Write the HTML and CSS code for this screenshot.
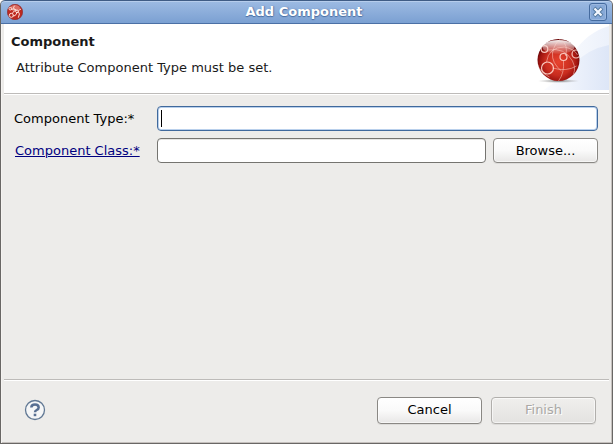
FILE: index.html
```html
<!DOCTYPE html>
<html lang="en">
<head>
<meta charset="utf-8">
<title>Add Component</title>
<link rel="stylesheet" href="styles.css">
</head>
<body>
<form class="dialog">
  <div class="titlebar">
    <svg class="app-icon" viewBox="0 0 48 48" aria-hidden="true">
      <circle cx="24" cy="24" r="23" fill="#bd2920" stroke="#8c2d32" stroke-width="2"/>
      <ellipse cx="24" cy="12" rx="15" ry="9" fill="#e88b80" opacity=".7"/>
      <g fill="none" stroke="#ffdcd4" stroke-width="3">
        <circle cx="13" cy="34" r="6"/><circle cx="30" cy="22" r="4"/><circle cx="10" cy="14" r="4"/>
        <path d="M12 16q12-4 17 3M31 25q-6 14-14 11M16 29q3-10 11-9M33 21q8 8 1 20M23 5q-8 9 3 14M34 20l8-5"/>
      </g>
    </svg>
    <div class="title">Add Component</div>
    <button class="close" type="button" aria-label="Close">
      <svg viewBox="0 0 16 16" aria-hidden="true">
        <path d="M4 4 12 12M12 4 4 12" stroke="#54799f" stroke-width="4"/>
        <path d="M4.500 4.500 11.500 11.500M11.500 4.500 4.500 11.500" stroke="#f4f8ff" stroke-width="2.200"/>
      </svg>
    </button>
  </div>
  <header class="banner">
    <div class="banner-text">
      <h1>Component</h1>
      <p>Attribute Component Type must be set.</p>
    </div>
    <svg class="banner-art" viewBox="0 0 75 66" aria-hidden="true">
      <defs>
        <radialGradient id="ball" cx=".5" cy=".55" r=".52">
          <stop offset="0" stop-color="#e8442f"/><stop offset=".6" stop-color="#c92d20"/><stop offset=".86" stop-color="#a01510"/><stop offset="1" stop-color="#690507"/>
        </radialGradient>
        <linearGradient id="shine" x2="0" y2="1"><stop offset="0" stop-color="#fff" stop-opacity=".95"/><stop offset="1" stop-color="#fff" stop-opacity=".05"/></linearGradient>
        <linearGradient id="sweep"><stop offset="0" stop-color="#fff"/><stop offset="1" stop-color="#ecf1fb"/></linearGradient>
        <linearGradient id="sweep2"><stop offset="0" stop-color="#fbfcff"/><stop offset="1" stop-color="#dde6f7"/></linearGradient>
        <radialGradient id="shade"><stop offset="0" stop-color="#555" stop-opacity=".8"/><stop offset="1" stop-color="#999" stop-opacity="0"/></radialGradient>
        <clipPath id="globe"><circle cx="24" cy="35" r="21"/></clipPath>
      </defs>
      <path d="M75 2Q54 8 40 28T10 66H75Z" fill="url(#sweep)"/>
      <path d="M75 21Q54 25 40 40T10 66H75Z" fill="url(#sweep2)"/>
      <g transform="translate(.5 1)">
      <ellipse cx="24" cy="56" rx="21" ry="2" fill="url(#shade)"/>
      <circle cx="24" cy="35" r="21" fill="url(#ball)"/>
      <ellipse cx="24" cy="22" rx="16" ry="7" fill="url(#shine)"/>
      <g clip-path="url(#globe)" fill="none" stroke="#ffd9d0">
        <g stroke-width="1" opacity=".5">
          <path d="M26 14Q20 18 18 28Q17 38 27 46M14 25Q30 22 38 36Q43 46 36 54M12 37Q14 22 30 22Q40 24 43 30M18 43Q32 47 42 41M29 36Q30 48 24 56M31 31Q34 20 27 15M3 39Q5 47 15 52"/>
        </g>
        <g stroke-width="1.200" opacity=".9"><circle cx="13" cy="43" r="6"/><circle cx="29" cy="32" r="3.500"/><circle cx="10" cy="24" r="3.300"/><circle cx="41.500" cy="29" r="4"/></g>
      </g>
      </g>
    </svg>
  </header>
  <main class="fields">
    <label for="type">Component Type:*</label>
    <div class="entry wide focused">
      <input id="type" type="text">
      <span class="caret"></span>
    </div>
    <a id="class-link" href="#class">Component Class:*</a>
    <div class="entry"><input id="class" type="text" aria-labelledby="class-link"></div>
    <button class="btn browse" type="button">Browse...</button>
  </main>
  <footer class="actions">
    <button class="help" type="button" aria-label="Help">
      <svg viewBox="0 0 22 22" aria-hidden="true">
        <circle cx="11" cy="11" r="9.500" fill="#f5f6f7" stroke="#617894" stroke-width="1.300"/>
        <path d="M7.300 8.500Q7.500 5.500 11 5.500T14.700 8.500Q14.700 10 12.700 11Q11 11.900 11 13.300" fill="none" stroke="#586f92" stroke-width="2.500"/>
        <path d="M9.700 14.700h2.600v2.500H9.700z" fill="#586f92"/>
      </svg>
    </button>
    <button class="btn" type="button">Cancel</button>
    <button class="btn" type="submit" disabled>Finish</button>
  </footer>
</form>
</body>
</html>
```
FILE: styles.css
```css
* {
  box-sizing: border-box;
}

body {
  margin: 0;
  background: #fff;
  color: #1a1a1a;
  font: 13px/16px "DejaVu Sans", sans-serif;
}

.dialog {
  display: flex;
  flex-direction: column;
  min-height: 100vh;
  border: 1px solid #696765;
  border-top: 0;
  border-radius: 5px 5px 0 0;
  background: #edecea;
  box-shadow: inset 1px 0 #f5f3f1, inset -1px -1px #c5c0bd;
  overflow: hidden;
}

.titlebar {
  display: flex;
  align-items: center;
  height: 24px;
  margin: 0 -1px;
  padding: 0 5px 0 6px;
  border: 1px solid #3f5c85;
  border-bottom-color: #4b70a5;
  border-radius: 5px 5px 0 0;
  background: linear-gradient(#9dbbe3, #7ba0d2);
  box-shadow: inset 0 1px #b6cdec;
}

.app-icon {
  width: 16px;
  height: 16px;
}

.title {
  flex: 1;
  padding-right: 4px;
  color: #fff;
  font-weight: bold;
  text-align: center;
  text-shadow: 0 1px 1px #486da2, 1px 0 1px #587cae;
}

.close {
  width: 18px;
  height: 18px;
  padding: 0;
  border: 1px solid #456b9f;
  border-radius: 3px;
  background: #87a9d8;
  box-shadow: inset 0 0 0 1px #9bb8df;
}

.close svg {
  display: block;
  width: 16px;
  height: 16px;
}

.banner {
  display: flex;
  justify-content: space-between;
  height: 70px;
  margin: 0 3px;
  border-bottom: 1px solid #bdbbb9;
  box-shadow: 0 1px #fff;
  background: #fff;
}

.banner-text {
  padding: 10px 0 0 7px;
}

.banner h1 {
  margin: 0;
  font-size: 13px;
  line-height: 16px;
}

.banner p {
  margin: 10px 0 0 5px;
}

.banner-art {
  width: 75px;
  height: 66px;
}

.fields {
  display: grid;
  grid-template-columns: 136px 1fr 105px;
  gap: 7px;
  align-content: start;
  align-items: center;
  flex: 1;
  margin: 0 3px;
  padding: 12px 11px 0 10px;
  border-bottom: 1px solid #bdbbb9;
  box-shadow: 0 1px #fff;
}

.fields label {
  color: #000;
}

.fields a {
  margin-left: 1px;
  color: #00007f;
}

.entry {
  position: relative;
}

.wide {
  grid-column: span 2;
}

.entry input {
  display: block;
  width: 100%;
  height: 25px;
  padding: 0 4px;
  border: 1px solid #757470;
  border-radius: 4px;
  background: #fff;
  box-shadow: inset 0 1px #e6e5e3;
  font: inherit;
}

.focused input {
  border-color: #40699c;
  box-shadow: inset 0 0 0 1px #b9d0ec;
}

.caret {
  position: absolute;
  top: 4px;
  left: 4px;
  width: 1px;
  height: 17px;
  background: #000;
}

.btn {
  width: 105px;
  height: 27px;
  padding: 0;
  border: 1px solid #8a8884;
  border-radius: 4px;
  background: linear-gradient(#fff, #fafafa 50%, #e8e7e6);
  box-shadow: inset 0 0 0 1px #fff9, 0 1px #dddcda;
  color: #000;
  font: inherit;
}

.browse {
  height: 25px;
}

.btn:disabled {
  border-color: #b1afac;
  background: linear-gradient(#f0efed, #e3e2e0);
  color: #aaa8a5;
  text-shadow: 1px 1px #fff;
}

.actions {
  display: flex;
  align-items: center;
  gap: 9px;
  height: 63px;
  padding: 0 16px 3px 23px;
}

.help {
  width: 22px;
  height: 22px;
  margin-right: auto;
  padding: 0;
  border: 0;
  background: none;
}

.help svg {
  display: block;
}
```
